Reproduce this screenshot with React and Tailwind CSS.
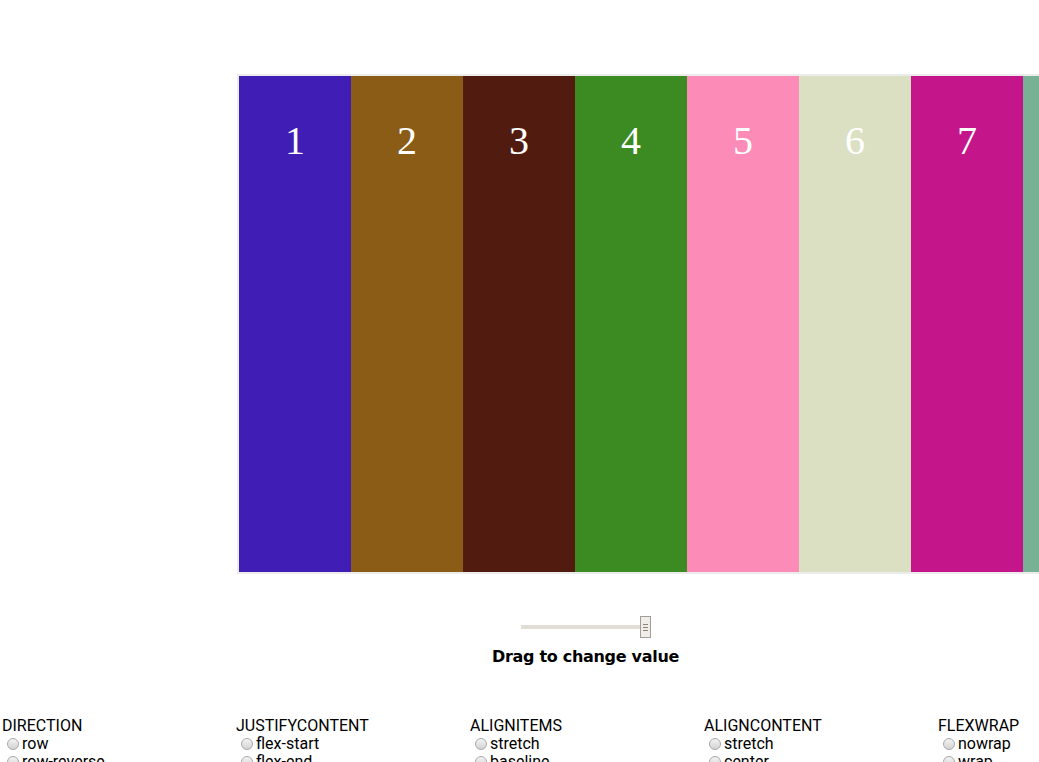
import React from 'react';

const boxes = [
  { n: 1, bg: 'bg-[#401db4]' },
  { n: 2, bg: 'bg-[#8b5c15]' },
  { n: 3, bg: 'bg-[#521b10]' },
  { n: 4, bg: 'bg-[#3c8a22]' },
  { n: 5, bg: 'bg-[#fc8bb7]' },
  { n: 6, bg: 'bg-[#dae0c1]' },
  { n: 7, bg: 'bg-[#c4168a]' },
  { n: 8, bg: 'bg-[#77b294]' },
];

const groups = [
  { title: 'DIRECTION', options: ['row', 'row-reverse', 'column', 'column-reverse'] },
  { title: 'JUSTIFYCONTENT', options: ['flex-start', 'flex-end', 'center', 'space-between', 'space-around'] },
  { title: 'ALIGNITEMS', options: ['stretch', 'baseline', 'center', 'flex-start', 'flex-end'] },
  { title: 'ALIGNCONTENT', options: ['stretch', 'center', 'flex-start', 'flex-end', 'space-between', 'space-around'] },
  { title: 'FLEXWRAP', options: ['nowrap', 'wrap', 'wrap-reverse'] },
];

function Radio() {
  return (
    <span className="inline-block w-[12px] h-[12px] rounded-full border border-[#a9a9a9] bg-gradient-to-b from-[#f4f4f4] to-[#d2d2d2] ml-[5px] mr-[3px] shrink-0" />
  );
}

export default function App() {
  return (
    <div className="w-[1039px] h-[762px] overflow-hidden bg-white font-['Roboto',sans-serif]">
      <div className="pt-[74px] pl-[237px]">
        <div className="flex w-[1000px] h-[500px] border-2 border-[#ececec] border-r-0">
          {boxes.map((b) => (
            <div key={b.n} className={`${b.bg} w-[112px] shrink-0 text-center text-white text-[40px] leading-[1.15] pt-[42px] font-['Liberation_Serif',serif]`}>
              {b.n}
            </div>
          ))}
        </div>
      </div>

      <div className="flex flex-col items-center mt-[42px] ml-[132px]">
        <div className="relative w-[130px] h-[22px] flex items-center">
          <div className="w-full h-[4px] bg-[#e2ddd6]" />
          <div className="absolute left-[119px] top-0 w-[11px] h-[22px] bg-[#f0ede9] border border-[#a49d95] flex flex-col items-center justify-center gap-[2px]">
            <span className="block w-[5px] h-px bg-[#8c857d]" />
            <span className="block w-[5px] h-px bg-[#8c857d]" />
            <span className="block w-[5px] h-px bg-[#8c857d]" />
          </div>
        </div>
        <div className="mt-[7px] text-[16px] font-bold tracking-[-0.3px] text-black font-['Comic_Sans_MS','DejaVu_Sans',cursive]">
          Drag to change value
        </div>
      </div>

      <div className="flex pl-[2px] mt-[48px] text-[16px] leading-[18px] text-black">
        {groups.map((g) => (
          <div key={g.title} className="w-[234px] shrink-0">
            <div>{g.title}</div>
            {g.options.map((o) => (
              <div key={o} className="flex items-center">
                <Radio />
                <span>{o}</span>
              </div>
            ))}
          </div>
        ))}
      </div>
    </div>
  );
}
